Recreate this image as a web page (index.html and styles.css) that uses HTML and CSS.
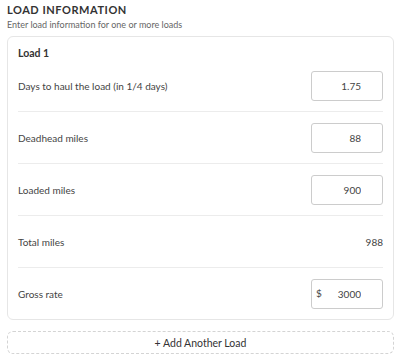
FILE: index.html
```html
<!DOCTYPE html>
<html lang="en">
<head>
    <meta charset="UTF-8">
    <meta name="viewport" content="width=device-width, initial-scale=1.0">
    <title>Load Information</title>
    <link rel="stylesheet" href="styles.css">
</head>
<body>
    <div class="section">
        <h2 class="section-title">LOAD INFORMATION</h2>
        <p class="section-sub">Enter load information for one or more loads</p>

        <div class="load-card">
            <div class="load-title">Load 1</div>

            <div class="field-row">
                <label for="days">Days to haul the load (in 1/4 days)</label>
                <input type="text" id="days" value="1.75">
            </div>
            <div class="field-row">
                <label for="deadhead">Deadhead miles</label>
                <input type="text" id="deadhead" value="88">
            </div>
            <div class="field-row">
                <label for="loaded">Loaded miles</label>
                <input type="text" id="loaded" value="900">
            </div>
            <div class="field-row">
                <span class="label">Total miles</span>
                <span class="value">988</span>
            </div>
            <div class="field-row">
                <label for="gross">Gross rate</label>
                <div class="money-input">
                    <span class="currency">$</span>
                    <input type="text" id="gross" value="3000">
                </div>
            </div>
        </div>

        <button class="add-load">+ Add Another Load</button>
    </div>
</body>
</html>
```

FILE: styles.css
```css
body {
    font-family: Lato, "Open Sans", sans-serif;
    margin: 0;
    padding: 3px 6px 0 7px;
    background: white;
    color: #333;
}
.section-title {
    font-size: 11px;
    font-weight: 700;
    letter-spacing: 0.55px;
    margin: 0;
    line-height: 14px;
    color: #333;
}
.section-sub {
    font-size: 9px;
    color: #666;
    margin: 2px 0 0;
    line-height: 11px;
}
.load-card {
    margin-top: 6px;
    border: 1px solid #e6e6e6;
    border-radius: 6px;
    padding: 0 10px;
}
.load-title {
    font-size: 10.5px;
    font-weight: 700;
    line-height: 14px;
    padding: 9px 0 0;
    height: 14px;
}
.field-row {
    display: flex;
    align-items: center;
    justify-content: space-between;
    height: 51px;
    border-bottom: 1px solid #ececec;
    font-size: 10px;
}
.field-row:last-child {
    border-bottom: none;
}
.field-row label,
.field-row .label {
    color: #444;
}
.field-row input {
    width: 72px;
    height: 30px;
    box-sizing: border-box;
    border: 1px solid #ccc;
    border-radius: 3px;
    text-align: right;
    padding: 0 21px 0 4px;
    font-family: inherit;
    font-size: 10px;
    color: #444;
}
.field-row .value {
    color: #444;
}
.money-input {
    position: relative;
    display: flex;
}
.money-input .currency {
    position: absolute;
    left: 5px;
    top: 8px;
    font-size: 10px;
    color: #444;
}
.add-load {
    display: block;
    width: 100%;
    margin-top: 11px;
    height: 23px;
    background: white;
    border: 1px dashed #d4d4d4;
    border-radius: 6px;
    font-family: inherit;
    font-size: 10.5px;
    color: #333;
}
```
